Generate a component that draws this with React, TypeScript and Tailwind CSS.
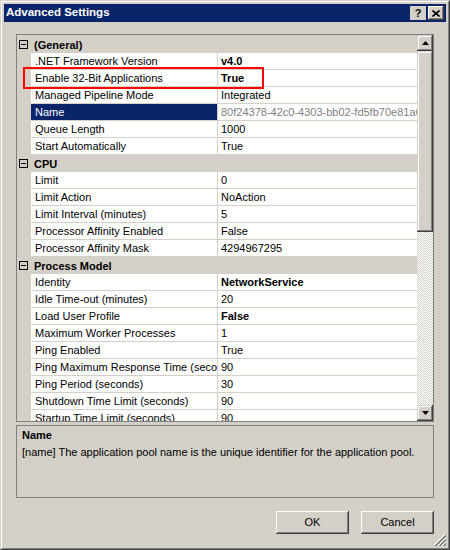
type Row = { name: string; value: string; bold?: boolean; selected?: boolean };
type Group = { title: string; rows: Row[] };

const groups: Group[] = [
  {
    title: "(General)",
    rows: [
      { name: ".NET Framework Version", value: "v4.0", bold: true },
      { name: "Enable 32-Bit Applications", value: "True", bold: true },
      { name: "Managed Pipeline Mode", value: "Integrated" },
      { name: "Name", value: "80f24378-42c0-4303-bb02-fd5fb70e81a6", selected: true },
      { name: "Queue Length", value: "1000" },
      { name: "Start Automatically", value: "True" },
    ],
  },
  {
    title: "CPU",
    rows: [
      { name: "Limit", value: "0" },
      { name: "Limit Action", value: "NoAction" },
      { name: "Limit Interval (minutes)", value: "5" },
      { name: "Processor Affinity Enabled", value: "False" },
      { name: "Processor Affinity Mask", value: "4294967295" },
    ],
  },
  {
    title: "Process Model",
    rows: [
      { name: "Identity", value: "NetworkService", bold: true },
      { name: "Idle Time-out (minutes)", value: "20" },
      { name: "Load User Profile", value: "False", bold: true },
      { name: "Maximum Worker Processes", value: "1" },
      { name: "Ping Enabled", value: "True" },
      { name: "Ping Maximum Response Time (seconds)", value: "90" },
      { name: "Ping Period (seconds)", value: "30" },
      { name: "Shutdown Time Limit (seconds)", value: "90" },
      { name: "Startup Time Limit (seconds)", value: "90" },
    ],
  },
];

const raised =
  "bg-[#d4d0c8] shadow-[inset_-1px_-1px_#404040,inset_1px_1px_#d4d0c8,inset_-2px_-2px_#808080,inset_2px_2px_#ffffff]";
const button =
  "bg-[#d4d0c8] shadow-[inset_-1px_-1px_#404040,inset_1px_1px_#ffffff,inset_-2px_-2px_#808080,inset_2px_2px_#d4d0c8]";

function Arrow({ up }: { up?: boolean }) {
  return (
    <svg width="7" height="4" viewBox="0 0 7 4">
      <path d={up ? "M3.5 0 L7 4 L0 4 Z" : "M0 0 L7 0 L3.5 4 Z"} fill="#000" />
    </svg>
  );
}

function GroupHeader({ title }: { title: string }) {
  return (
    <div className="flex h-[17px] items-center bg-[#d4d0c8]">
      <div className="ml-[2px] flex h-[9px] w-[9px] items-center justify-center border border-black">
        <div className="h-px w-[5px] bg-black" />
      </div>
      <span className="ml-[6px] font-bold leading-[16px]">{title}</span>
    </div>
  );
}

function PropRow({ row }: { row: Row }) {
  return (
    <div className="flex h-[17px]">
      <div className="w-[14px] shrink-0 bg-[#d4d0c8]" />
      <div
        className={`w-[187px] shrink-0 overflow-hidden whitespace-nowrap border-b border-r border-[#d4d0c8] pl-[4px] leading-[16px] ${
          row.selected ? "bg-[#0a246a] text-white" : "bg-white"
        }`}
      >
        {row.name}
      </div>
      <div
        className={`flex-1 overflow-hidden whitespace-nowrap border-b border-[#d4d0c8] bg-white pl-[3px] leading-[16px] ${
          row.bold ? "font-bold" : ""
        } ${row.selected ? "text-[#808080]" : ""}`}
      >
        {row.value}
      </div>
    </div>
  );
}

export default function App() {
  return (
    <div className="relative h-[550px] w-[450px] border border-b-[#404040] border-l-[#d4d0c8] border-r-[#404040] border-t-[#d4d0c8] bg-[#d4d0c8] font-['Liberation_Sans',Arial,sans-serif] text-[11px] text-black">
      <div className="flex h-full flex-col border border-b-[#808080] border-l-white border-r-[#808080] border-t-white p-[2px]">
        {/* title bar */}
        <div className="flex h-[18px] shrink-0 items-center bg-[#0a246a] pl-[2px] pr-[2px]">
          <span className="flex-1 text-[11.5px] font-bold text-white">Advanced Settings</span>
          <div className={`flex h-[14px] w-[16px] items-center justify-center ${raised.replace("inset_1px_1px_#d4d0c8", "inset_1px_1px_#ffffff")}`}>
            <span className="text-[11px] font-bold leading-none">?</span>
          </div>
          <div className={`ml-[2px] flex h-[14px] w-[16px] items-center justify-center ${button}`}>
            <svg width="8" height="7" viewBox="0 0 8 7">
              <path d="M0.5 0.5 L7.5 6.5 M7.5 0.5 L0.5 6.5" stroke="#000" strokeWidth="1.6" />
            </svg>
          </div>
        </div>

        <div className="flex flex-1 flex-col px-[12px]">
          {/* property grid */}
          <div className="mt-[12px] flex h-[388px] shrink-0 border border-[#808080]">
            <div className="flex-1 overflow-hidden pt-px">
              {groups.map((g) => (
                <div key={g.title}>
                  <GroupHeader title={g.title} />
                  {g.rows.map((r) => (
                    <PropRow key={r.name} row={r} />
                  ))}
                </div>
              ))}
            </div>
            <div className="flex w-[16px] shrink-0 flex-col">
              <div className={`flex h-[16px] items-center justify-center ${raised}`}>
                <Arrow up />
              </div>
              <div className={`h-[181px] ${raised}`} />
              <div className="flex-1 bg-[repeating-conic-gradient(#d4d0c8_0_25%,#ffffff_0_50%)] bg-[length:2px_2px]" />
              <div className={`flex h-[16px] items-center justify-center ${raised}`}>
                <Arrow />
              </div>
            </div>
          </div>

          {/* description */}
          <div className="mt-[3px] h-[73px] shrink-0 border border-[#808080] pl-[5px] pt-px leading-[17px]">
            <div className="font-bold">Name</div>
            <div>[name] The application pool name is the unique identifier for the application pool.</div>
          </div>

          {/* buttons */}
          <div className="mt-[13px] flex justify-end gap-[12px]">
            <button className={`h-[23px] w-[73px] ${button}`}>OK</button>
            <button className={`h-[23px] w-[73px] ${button}`}>Cancel</button>
          </div>
        </div>
      </div>

      {/* highlight box */}
      <div className="absolute left-[22px] top-[66px] h-[22px] w-[241px] border-2 border-[#ff0000]" />

      {/* size grip */}
      <svg className="absolute bottom-[3px] right-[3px]" width="12" height="12" viewBox="0 0 12 12">
        <path d="M11 0 L0 11" stroke="#fff" />
        <path d="M12 1 L1 12 M12 2 L2 12" stroke="#808080" />
        <path d="M12 4 L4 12" stroke="#fff" />
        <path d="M12 5 L5 12 M12 6 L6 12" stroke="#808080" />
        <path d="M12 8 L8 12" stroke="#fff" />
        <path d="M12 9 L9 12 M12 10 L10 12" stroke="#808080" />
      </svg>
    </div>
  );
}
